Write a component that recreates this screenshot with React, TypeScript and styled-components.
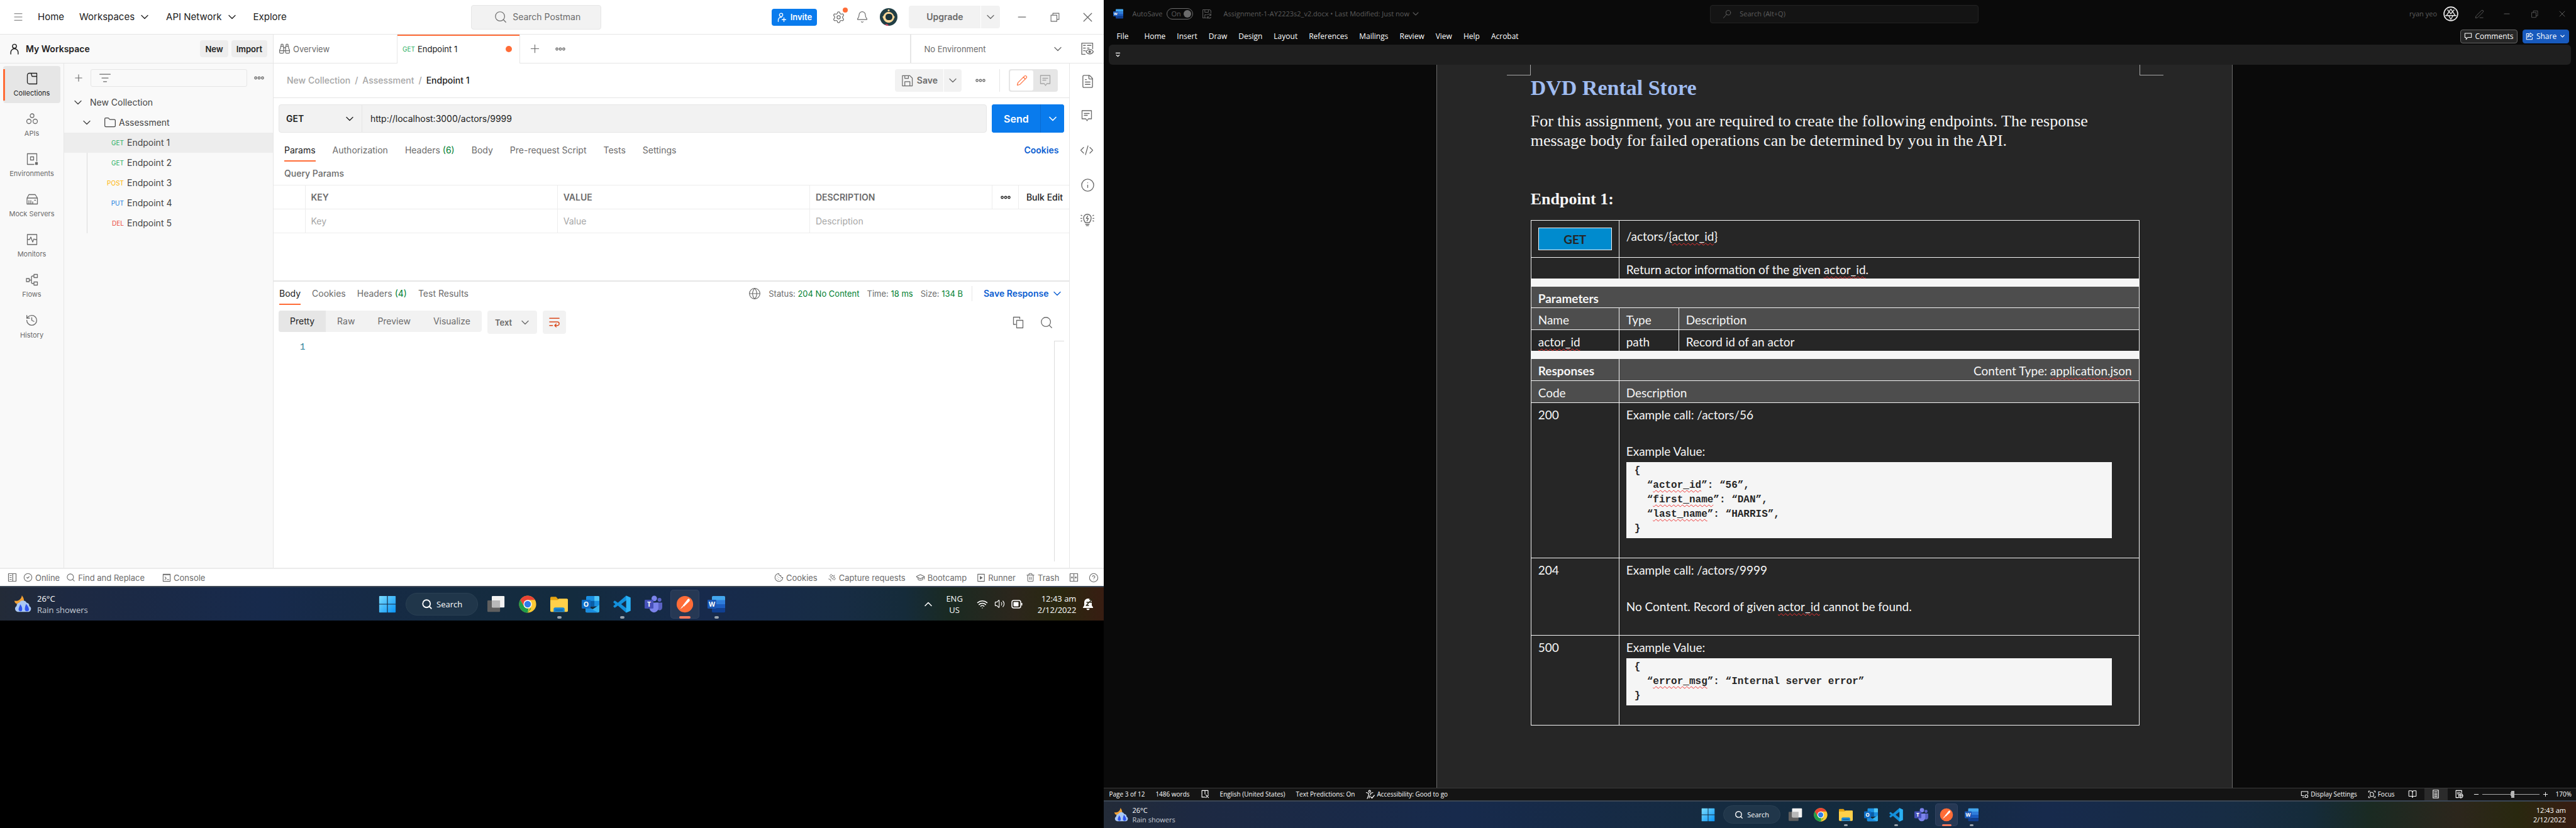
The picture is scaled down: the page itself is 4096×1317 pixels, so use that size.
import React from "react";
import styled, { createGlobalStyle, css } from "styled-components";
import { Menu, ChevronDown, ChevronUp, Search, Bell, X, Minus, Plus, ListFilter, History, Binoculars, Settings, Globe, FileText, Info, Pencil, Cookie, Trash2, CircleHelp, CircleCheck, Folder, Satellite, GraduationCap, Wifi, Volume2, BookOpen, PenLine } from "lucide-react";

const ui = `Inter, "Liberation Sans", sans-serif`;
const segoe = `"Open Sans", "Noto Sans", sans-serif`;
const line = "#e6e6e6";

const Global = createGlobalStyle`
  * { box-sizing: border-box; }
  body { margin: 0; background: #000; }
  button, input, select { font: inherit; color: inherit; margin: 0; padding: 0; border: 0; background: none; border-radius: 0; min-width: 0; white-space: nowrap; }
  input:focus, select:focus { outline: none; }
  a { color: inherit; text-decoration: none; }
  h1, h2, p { margin: 0; }
  svg { display: block; flex: none; }
`;

/* ---------- shared ---------- */
const Desktop = styled.div`
  display: flex;
  align-items: flex-start;
  min-height: 100vh;
`;
const Display = styled.div<{ $share: number }>`
  flex: ${(p) => p.$share} 1 0;
  min-width: 0;
  aspect-ratio: 16 / 9;
  display: flex;
  flex-direction: column;
  overflow: hidden;
`;
const Spring = styled.div`
  flex: 1;
`;

type IcoProps = { s?: number; w?: number; children?: React.ReactNode };
const Ico = ({ s = 20, w = 1.3, children }: IcoProps) => (
  <svg width={s} height={s} viewBox="0 0 20 20" fill="none" stroke="currentColor" strokeWidth={w} strokeLinecap="round" strokeLinejoin="round" aria-hidden="true">
    {children}
  </svg>
);
const Dots = ({ s = 18 }: { s?: number }) => (
  <Ico s={s} w={1.5}><circle cx="4" cy="10" r="1.9" /><circle cx="10" cy="10" r="1.9" /><circle cx="16" cy="10" r="1.9" /></Ico>
);
const NoteIcon = ({ s = 20 }: { s?: number }) => (
  <Ico s={s}><path d="M2.500 2h15v13h-5L10.500 18 8.500 15h-6zM6 6.500h8M6 9.500h5" /></Ico>
);
const Chev = ({ s = 20, w = 1.6 }: { s?: number; w?: number }) => <ChevronDown size={s} strokeWidth={w} />;

/* ---------- taskbar ---------- */
type Size = { $big: boolean };
const Bar = styled.footer<Size>`
  flex: none;
  height: ${(p) => (p.$big ? 55 : 44)}px;
  display: grid;
  grid-template-columns: 1fr auto 1fr;
  align-items: center;
  border-top: 2px solid #3b4654;
  color: #fff;
  font: 400 ${(p) => (p.$big ? 13 : 11)}px/${(p) => (p.$big ? 18 : 15)}px ${segoe};
  background: linear-gradient(90deg, #232b38 0%, #1d2942 6%, #172a4c 24%, #152b40 42%, #132b3e 52%, #172a4c 64%, #172c44 76%, #152b3a 82%, #1a2a22 86%, #2c261c 92%, #29280f 96%, #381d12 100%);
`;
const Weather = styled.div<Size>`
  display: flex;
  align-items: center;
  gap: ${(p) => (p.$big ? 9 : 6)}px;
  padding-left: ${(p) => (p.$big ? 23 : 17)}px;
  span { color: #c5cbd4; }
`;
const Apps = styled.div`
  display: flex;
  align-items: center;
  height: 100%;
`;
const AppButton = styled.button<Size & { $active?: boolean }>`
  width: ${(p) => (p.$big ? 46 : 36)}px;
  height: ${(p) => (p.$big ? 46 : 36)}px;
  margin: 0 2px;
  display: grid;
  place-items: center;
  border-radius: 5px;
  ${(p) => p.$active && css`background: #263854; box-shadow: inset 0 0 0 1px #314360;`}
  > * { grid-area: 1 / 1; }
`;
const Running = styled.i<Size & { $active?: boolean }>`
  align-self: end;
  width: ${(p) => (p.$active ? (p.$big ? 18 : 15) : p.$big ? 7 : 6)}px;
  height: ${(p) => (p.$big ? 4 : 3)}px;
  border-radius: 2px;
  background: ${(p) => (p.$active ? "#f5785c" : "#9aa3ad")};
`;
const Pill = styled.button<Size>`
  display: flex;
  align-items: center;
  justify-content: center;
  gap: 6px;
  width: ${(p) => (p.$big ? 115 : 91)}px;
  height: ${(p) => (p.$big ? 36 : 29)}px;
  margin: 0 4px;
  border-radius: 18px;
  background: #20364a;
  border: 1px solid #2a4053;
`;
const Tray = styled.div`
  display: flex;
  justify-content: flex-end;
  align-items: center;
  gap: 10px;
  padding-right: 16px;
`;
const Lang = styled.span`
  text-align: center;
  margin: 0 12px 0 8px;
`;
const Clock = styled.time`
  text-align: right;
  margin-left: 14px;
`;

const LetterTile = ({ d, t, tile }: { d: React.ReactNode; t: string; tile: string }) => (
  <>
    {d}
    <rect x="0" y="8" width="16" height="16" rx="1.500" fill={tile} />
    <text x="8" y="20.500" textAnchor="middle" fontFamily="Open Sans" fontWeight="700" fontSize="12" fill="#fff">{t}</text>
  </>
);
const icons: Record<string, React.ReactNode> = {
  win: (<><defs><linearGradient id="wg" x1="0" y1="0" x2="1" y2="1"><stop offset="0" stopColor="#7adcff" /><stop offset="1" stopColor="#0a94f5" /></linearGradient></defs><path fill="url(#wg)" d="M1 2a1 1 0 0 1 1-1h13.300v14.300H1zM16.700 1H30a1 1 0 0 1 1 1v13.300H16.700zM1 16.700h14.300V31H2a1 1 0 0 1-1-1zM16.700 16.700H31V30a1 1 0 0 1-1 1H16.700z" /></>),
  task: (<><rect x="0" y="9" width="23" height="21" rx="1.500" fill="#5f5f5f" /><rect x="8" y="1" width="23" height="21" rx="1.500" fill="#f2f2f2" /><path d="M8 9h15v13H9.500A1.500 1.500 0 0 1 8 20.500z" fill="#b9b9b9" /></>),
  chrome: (<><circle cx="16" cy="16" r="15.500" fill="#fcc934" /><path d="M2.600 8.200A15.500 15.500 0 0 1 29.400 8.200H16L9.300 19.900z" fill="#ea4335" /><path d="M2.600 8.200 9.300 19.900A7.700 7.700 0 0 0 16 23.700h6.700L16 31.500A15.500 15.500 0 0 1 2.600 8.200z" fill="#1e9e49" /><path d="M22.700 19.900 16 31.500 17.500 23.600z" fill="#fcc934" /><circle cx="16" cy="16" r="7.600" fill="#fff" /><circle cx="16" cy="16" r="6" fill="#2f7de9" /></>),
  files: (<><path d="M0 4.500A2 2 0 0 1 2 2.500h8.500l3.500 4h16a2 2 0 0 1 2 2V12H0z" fill="#e5a412" /><path d="M0 8.500h13l2.500-2.500h14.500a2 2 0 0 1 2 2v20a2 2 0 0 1-2 2H2a2 2 0 0 1-2-2z" fill="#ffd04a" /><path d="M6 30v-5a3 3 0 0 1 3-3h14a3 3 0 0 1 3 3v5z" fill="#1b87d4" /><path d="M9 26h14v1.500H9z" fill="#0b5a9c" /></>),
  outlook: (<LetterTile t="O" tile="#0f6cc4" d={<><path d="M8 3a2 2 0 0 1 2-2h20a2 2 0 0 1 2 2v17H8z" fill="#1a8fe0" /><path d="M23 1h7a2 2 0 0 1 2 2v7h-9z" fill="#4fc5f7" /><path d="M8 10h15v10H8z" fill="#0a5ea8" /><path d="M7 20l13 5 12-8v12a2 2 0 0 1-2 2H9a2 2 0 0 1-2-2z" fill="#35b4f0" /><path d="M7 20l23 11H9a2 2 0 0 1-2-2z" fill="#1b8de0" /></>} />),
  code: (<><path d="M23.500.5 31.500 4v24l-8 3.500-15-13L3 22.500.500 20.500V19L4 16 .5 13v-1.500L3 9.500l5.500 4z" fill="#1390dc" /><path d="M23.500.5 31.500 4v24l-8 3.500z" fill="#2ab1f4" /><path d="M23.500 9v14L14.500 16z" fill="#162b46" /></>),
  teams: (<LetterTile t="T" tile="#4650b8" d={<><circle cx="27" cy="8" r="3.500" fill="#5a62c4" /><circle cx="17.500" cy="5.500" r="5" fill="#7b83eb" /><path d="M20 13h12v9a5 5 0 0 1-8 4z" fill="#5a62c4" /><path d="M9 13h16v10a8 8 0 0 1-16 0z" fill="#7b83eb" /></>} />),
  postman: (<><circle cx="16" cy="16" r="15" fill="#ff6c37" /><path d="M23.800 6.300c1.500 1.200 1.500 3.300.2 4.600L14 20.500l-2-2 8.500-10.900c.9-1.100 2.200-1.900 3.300-1.300zM11.500 19l1.700 1.700-5.700 4.300z" fill="#fff" /></>),
  word: (<LetterTile t="W" tile="#1a57b5" d={<><path d="M8 3a2 2 0 0 1 2-2h20a2 2 0 0 1 2 2v6H8z" fill="#43a6ee" /><path d="M8 8.500h24V16H8z" fill="#2f7ddb" /><path d="M8 16h24v7.500H8z" fill="#1c5dc0" /><path d="M8 23.500h24V29a2 2 0 0 1-2 2H10a2 2 0 0 1-2-2z" fill="#103f91" /></>} />),
};
const Glyph = ({ name, s }: { name: string; s: number }) => (
  <svg width={s} height={s} viewBox="0 0 32 32" aria-hidden="true">{icons[name]}</svg>
);
const WeatherIcon = ({ s }: { s: number }) => (
  <svg width={s} height={s} viewBox="0 0 32 32" aria-hidden="true">
    <path d="M14 0c4 5 5 10 3 15L4 16C2 15 0 13 0 10c6 2 13-2 14-10z" fill="#f2a134" />
    <path d="M6 31a6 6 0 0 1-2-11 6 6 0 0 1 5-6 8 8 0 0 1 14 0 6 6 0 0 1 5 6 6 6 0 0 1-1 11z" fill="#a9c8f5" />
    <path d="M11 17c4 5 4 9 3 12a4 4 0 0 1-6-1c-1-3 1-6 3-11zM22 16c4 5 6 9 5 12a4 4 0 0 1-7 0c-1-3 0-7 2-12z" fill="#2f55ee" />
  </svg>
);
const pinned = [
  ["task", "Task view", 0], ["chrome", "Google Chrome", 0], ["files", "File Explorer", 1], ["outlook", "Outlook", 0],
  ["code", "Visual Studio Code", 1], ["teams", "Teams", 0], ["postman", "Postman", 2], ["word", "Word", 1],
] as const;
const Taskbar = ({ big, tray }: { big: boolean; tray?: React.ReactNode }) => {
  const s = big ? 28 : 22;
  return (
    <Bar $big={big}>
      <Weather $big={big}><WeatherIcon s={big ? 27 : 22} /><div>26°C<br /><span>Rain showers</span></div></Weather>
      <Apps>
        <AppButton $big={big} aria-label="Start"><Glyph name="win" s={s} /></AppButton>
        <Pill $big={big}><Search size={big ? 18 : 14} strokeWidth={2.4} />Search</Pill>
        {pinned.map(([n, label, state]) => (
          <AppButton key={n} $big={big} $active={state === 2} aria-label={label}>
            <Glyph name={n} s={s} />
            {state > 0 && <Running $big={big} $active={state === 2} />}
          </AppButton>
        ))}
      </Apps>
      <Tray>{tray}<Clock>12:43 am<br />2/12/2022</Clock>{big && (
        <svg width="18" height="20" viewBox="0 0 18 20" aria-hidden="true"><path d="M9 1a6 6 0 0 0-6 6v5l-2 3v1h16v-1l-2-3V7a6 6 0 0 0-6-6zM6.500 17a2.500 2.500 0 0 0 5 0z" fill="#fff" /><path d="M6.500 7h4L6.500 12h4M11 2.500h4L11 7h4" fill="none" stroke="#2a2413" strokeWidth="1.500" /></svg>
      )}</Tray>
    </Bar>
  );
};

/* ---------- API client window ---------- */
const ApiWindow = styled.main`
  flex: 1;
  min-height: 0;
  display: flex;
  flex-direction: column;
  background: #fff;
  color: #212121;
  font: 400 14px/20px ${ui};
`;
const TopBar = styled.header`
  flex: none;
  height: 55px;
  display: grid;
  grid-template-columns: minmax(0, 749fr) minmax(0, 207fr) minmax(0, 799fr);
  align-items: center;
  border-bottom: 1px solid ${line};
`;
const Nav = styled.nav`
  display: flex;
  align-items: center;
  gap: 24px;
  padding-left: 20px;
  font-size: 15px;
`;
const NavButton = styled.button`
  display: flex;
  align-items: center;
  gap: 6px;
`;
const Finder = styled.label`
  display: flex;
  align-items: center;
  gap: 8px;
  height: 39px;
  padding-left: 35px;
  border: 1px solid ${line};
  border-radius: 4px;
  background: #f2f2f2;
  color: #6b6b6b;
  input { flex: 1; width: 0; }
  input::placeholder { color: #6b6b6b; opacity: 1; }
`;
const Actions = styled.div`
  display: flex;
  align-items: center;
  justify-content: flex-end;
  gap: 18px;
  color: #6b6b6b;
`;
const Invite = styled.button`
  display: flex;
  align-items: center;
  justify-content: center;
  gap: 6px;
  width: 72px;
  height: 27px;
  margin-right: 6px;
  border-radius: 4px;
  background: #097bed;
  color: #fff;
  font-weight: 600;
  font-size: 13px;
`;
const IconButton = styled.button<{ $w?: number }>`
  display: grid;
  place-items: center;
  width: ${(p) => p.$w || 20}px;
  height: 28px;
  color: #6b6b6b;
`;
const GearBadge = styled.span`
  position: relative;
  &::after {
    content: "";
    position: absolute;
    top: -5px;
    right: -4px;
    width: 8px;
    height: 8px;
    border-radius: 50%;
    background: #ff6c37;
  }
`;
const Split = styled.div<{ $blue?: boolean; $h: number }>`
  display: flex;
  gap: 1px;
  height: ${(p) => p.$h}px;
  border-radius: 4px;
  overflow: hidden;
  font-weight: 600;
  background: ${(p) => (p.$blue ? "#0a6bd0" : "#fff")};
  color: ${(p) => (p.$blue ? "#fff" : "#6b6b6b")};
  button { display: flex; align-items: center; justify-content: center; gap: 6px; background: ${(p) => (p.$blue ? "#097bed" : "#f2f2f2")}; }
`;
const SplitPart = styled.button<{ $w: number; $large?: boolean }>`
  width: ${(p) => p.$w}px;
  font-size: ${(p) => (p.$large ? 16 : 14)}px;
`;
const WindowButtons = styled.div`
  display: flex;
  margin-left: -9px;
  color: #555;
`;
const Columns = styled.div`
  flex: 1;
  min-height: 0;
  display: flex;
`;
const Sidebar = styled.aside`
  flex: none;
  width: 435px;
  display: flex;
  flex-direction: column;
  background: #f9f9f9;
  border-right: 1px solid ${line};
`;
const SideHead = styled.div`
  flex: none;
  display: flex;
  align-items: center;
  gap: 5px;
  height: 46px;
  padding: 0 9px 0 14px;
  border-bottom: 1px solid ${line};
`;
const SideTitle = styled.h2`
  flex: 1;
  margin-left: 4px;
  font-size: 14px;
  font-weight: 600;
`;
const SmallButton = styled.button`
  height: 27px;
  padding: 0 8px;
  border-radius: 4px;
  background: #ededed;
  font-size: 13px;
  font-weight: 600;
`;
const Rail = styled.nav`
  flex: none;
  width: 102px;
  padding: 4px 5px;
  display: flex;
  flex-direction: column;
  gap: 5px;
  border-right: 1px solid ${line};
`;
const RailItem = styled.button<{ $on?: boolean }>`
  height: 59px;
  display: flex;
  flex-direction: column;
  align-items: center;
  justify-content: center;
  gap: 6px;
  padding-top: 1px;
  border-radius: 4px;
  font-size: 11px;
  line-height: 14px;
  color: ${(p) => (p.$on ? "#212121" : "#6b6b6b")};
  background: ${(p) => (p.$on ? "linear-gradient(#ff6c37, #ff6c37) 0 50% / 3px 50px no-repeat #e6e6e6" : "none")};
`;
const Tree = styled.div`
  flex: 1;
  min-width: 0;
  color: #454545;
`;
const TreeTools = styled.div`
  display: flex;
  align-items: center;
  gap: 10px;
  padding: 9px 13px 9px 14px;
  color: #6b6b6b;
`;
const FilterBox = styled.label`
  flex: 1;
  display: flex;
  align-items: center;
  height: 28px;
  padding-left: 12px;
  border: 1px solid ${line};
  border-radius: 3px;
  input { flex: 1; width: 0; }
`;
const TreeRow = styled.div<{ $pad: number; $on?: boolean }>`
  height: 32px;
  display: flex;
  align-items: center;
  padding-left: ${(p) => p.$pad}px;
  background: ${(p) => (p.$on ? "#ededed" : "none")};
`;
const Branch = styled.div`
  background: linear-gradient(#dcdcdc, #dcdcdc) 36px 0 / 1px 100% no-repeat;
`;
const verbColor: Record<string, string> = { GET: "#27ae60", POST: "#ffb400", PUT: "#1a7fe0", DEL: "#eb4a40" };
const Verb = styled.span<{ $m: string }>`
  color: ${(p) => verbColor[p.$m]};
  font-size: 10px;
`;
const TreeVerb = styled(Verb)`
  width: 60px;
  margin-right: 5px;
  text-align: right;
`;
const Gap = styled.span<{ $w: number }>`
  width: ${(p) => p.$w}px;
`;
const Workbench = styled.section`
  flex: 1;
  min-width: 0;
  display: flex;
  flex-direction: column;
`;
const TabStrip = styled.div`
  flex: none;
  display: flex;
  align-items: center;
  height: 46px;
  border-bottom: 1px solid ${line};
  color: #6b6b6b;
  font-size: 13px;
`;
const Tab = styled.button<{ $on?: boolean }>`
  display: flex;
  align-items: center;
  gap: 4px;
  width: 196px;
  height: 46px;
  padding: 0 12px 0 8px;
  ${(p) => p.$on && css`
    margin-bottom: -1px;
    background: #fff;
    color: #212121;
    border: 1px solid ${line};
    border-width: 0 1px;
    box-shadow: inset 0 2px #ff6c37;
  `}
`;
const Unsaved = styled.i`
  width: 10px;
  height: 10px;
  margin-left: auto;
  border-radius: 50%;
  background: #ff6c37;
`;
const Picker = styled.label<{ $w: number; $pad: number; $h: number }>`
  display: grid;
  align-items: center;
  width: ${(p) => p.$w}px;
  height: ${(p) => p.$h}px;
  > * { grid-area: 1 / 1; }
  select { appearance: none; width: 100%; height: 100%; padding-left: ${(p) => p.$pad}px; }
  svg { justify-self: end; margin-right: 9px; pointer-events: none; }
`;
const EnvPicker = styled(Picker)`
  border-left: 2px solid ${line};
`;
const Pane = styled.div`
  flex: 1;
  min-width: 0;
  display: flex;
  flex-direction: column;
`;
const ContextRail = styled.aside`
  flex: none;
  width: 55px;
  display: flex;
  flex-direction: column;
  align-items: center;
  gap: 27px;
  padding-top: 14px;
  border-left: 1px solid ${line};
`;
const CrumbRow = styled.div`
  flex: none;
  display: flex;
  align-items: center;
  height: 55px;
  padding: 0 18px 0 21px;
  border-bottom: 1px solid ${line};
`;
const Crumbs = styled.nav`
  flex: 1;
  display: flex;
  gap: 7px;
  font-weight: 500;
  color: #a6a6a6;
  b { font-weight: 500; color: #212121; }
`;
const Divider = styled.i<{ $h: number }>`
  width: 1px;
  height: ${(p) => p.$h}px;
  margin-right: 14px;
  background: ${line};
`;
const Modes = styled.div`
  display: flex;
  padding: 2px;
  border-radius: 4px;
  background: #e6e6e6;
`;
const Mode = styled.button<{ $on?: boolean }>`
  display: grid;
  place-items: center;
  width: 37px;
  height: 32px;
  border-radius: 3px;
  background: ${(p) => (p.$on ? "#fff" : "none")};
  color: ${(p) => (p.$on ? "#ff6c37" : "#a6a6a6")};
`;
const RequestPane = styled.div`
  flex: none;
  height: 292px;
  border-bottom: 2px solid ${line};
`;
const UrlRow = styled.form`
  display: flex;
  gap: 8px;
  padding: 10px 8px 0;
`;
const UrlBox = styled.div`
  flex: 1;
  display: flex;
  height: 45px;
  border: 1px solid ${line};
  border-radius: 4px;
  background: #f2f2f2;
  > input { flex: 1; padding-left: 13px; border-left: 1px solid ${line}; }
  select { font-weight: 600; }
`;
const Tabs = styled.div<{ $gap: number; $pad: number; $h: number }>`
  flex: none;
  display: flex;
  align-items: flex-end;
  gap: ${(p) => p.$gap}px;
  height: ${(p) => p.$h}px;
  padding: 0 ${(p) => p.$pad}px;
  color: #6b6b6b;
  em { font-style: normal; color: #007f31; }
`;
const TabButton = styled.button<{ $on?: boolean }>`
  height: 35px;
  border-bottom: 2px solid ${(p) => (p.$on ? "#ff6c37" : "transparent")};
  color: ${(p) => (p.$on ? "#212121" : "inherit")};
`;
const BlueLink = styled.a`
  display: flex;
  align-items: center;
  gap: 4px;
  height: 35px;
  padding-bottom: 2px;
  font-weight: 600;
  color: #0a5dd1;
`;
const PaneTitle = styled.h2`
  padding: 0 17px;
  font-size: 14px;
  font-weight: 500;
  line-height: 37px;
  color: #6b6b6b;
`;
const ParamTable = styled.table`
  width: 100%;
  table-layout: fixed;
  border-collapse: collapse;
  th, td { height: 38px; padding: 0 9px; border: 1px solid #ededed; text-align: left; color: #6b6b6b; }
  th { font-weight: 600; }
  th:first-child, td:first-child { border-left: 0; }
  th:last-child, td:last-child { border-right: 0; }
  th:nth-last-child(2) { color: #212121; padding-left: 12px; }
  input { width: 100%; }
  input::placeholder { color: #a6a6a6; opacity: 1; }
`;
const Bulk = styled.button`
  padding-left: 3px;
  font-weight: 500;
  color: #212121;
`;
const Stats = styled.div`
  display: flex;
  align-items: center;
  gap: 12px;
  height: 35px;
  padding-bottom: 2px;
  margin-left: auto;
  margin-right: -4px;
  font-size: 13px;
`;
const ToolRow = styled.div`
  flex: none;
  display: flex;
  align-items: flex-start;
  gap: 9px;
  padding: 9px 19px 11px 8px;
  color: #6b6b6b;
`;
const Segments = styled.div`
  display: flex;
  border-radius: 4px;
  overflow: hidden;
  background: #f2f2f2;
`;
const Segment = styled.button<{ $on?: boolean }>`
  height: 34px;
  padding: 0 18px;
  background: ${(p) => (p.$on ? "#e6e6e6" : "none")};
  color: ${(p) => (p.$on ? "#212121" : "inherit")};
`;
const GreyPicker = styled(Picker)`
  border-radius: 4px;
  background: #f2f2f2;
  font-size: 13px;
  font-weight: 600;
`;
const ToolButton = styled(IconButton)`
  height: 37px;
`;
const WrapButton = styled(ToolButton)`
  border-radius: 4px;
  background: #f2f2f2;
  color: #d9481c;
`;
const Editor = styled.div`
  flex: 1;
  display: flex;
  justify-content: space-between;
  padding: 0 8px 10px 42px;
  font-family: "Liberation Mono", monospace;
  color: #237893;
`;
const Ruler = styled.div`
  width: 16px;
  border: 1px solid #dcdcdc;
  border-width: 1px 0 0 1px;
`;
const StatusBar = styled.footer`
  flex: none;
  display: flex;
  align-items: center;
  gap: 16px;
  height: 29px;
  padding: 0 8px 0 12px;
  border-top: 2px solid #ebebeb;
  font-size: 13px;
  color: #6b6b6b;
  button { display: flex; align-items: center; gap: 4px; }
`;
const Near = styled.div`
  display: flex;
  gap: 10px;
  margin-right: 12px;
`;

const railItems: [string, React.ReactNode][] = [
  ["Collections", <Ico><path d="M2.500 4.500a3 3 0 0 1 3-3h12v17h-12a3 3 0 0 1-3-3zM8.500 1.500l1.500 5h7.500" /></Ico>],
  ["APIs", <Ico><circle cx="10" cy="5" r="3" /><circle cx="5" cy="14" r="3.500" /><circle cx="15" cy="14" r="3.500" /></Ico>],
  ["Environments", <Ico><path d="M17.500 13V1.500h-15v17H13M7.500 6.500h5v5h-5z" /><path d="M15.500 15.500h3v3h-3z" fill="currentColor" /></Ico>],
  ["Mock Servers", <Ico><path d="M2 8l3-5.500h10L18.500 8v9.500H2zM2 8h16.500M5 12v5M8 12v5M11 14v3M14 11.500h1.500" /></Ico>],
  ["Monitors", <Ico><path d="M2.500 2h15v16h-15zM2.500 10H6l2-4 3 8 2-5 1.500 1h3" /></Ico>],
  ["Flows", <Ico><path d="M1 8h4.500v5H1zM13 1.500h5.500v5H13zM13 13.500h5.500v5H13zM5.500 10.500H9M13 4h-2a2 2 0 0 0-2 2v8a2 2 0 0 0 2 2h2" /></Ico>],
  ["History", <History size={21} strokeWidth={1.5} />],
];
const endpoints: [string, string][] = [["GET", "Endpoint 1"], ["GET", "Endpoint 2"], ["POST", "Endpoint 3"], ["PUT", "Endpoint 4"], ["DEL", "Endpoint 5"]];

const RestoreIcon = () => <Ico s={17}><path d="M2.500 6h11v11.500h-11zM6 6V2.500h11.500V14h-4" /></Ico>;

const ApiClient = () => (
  <ApiWindow>
    <TopBar>
      <Nav>
        <IconButton $w={16} aria-label="Menu"><Menu size={18} strokeWidth={1.300} /></IconButton>
        <NavButton>Home</NavButton>
        <NavButton>Workspaces <Chev /></NavButton>
        <NavButton>API Network <Chev /></NavButton>
        <NavButton>Explore</NavButton>
      </Nav>
      <Finder><Search size={22} strokeWidth={1.300} /><input aria-label="Search Postman" placeholder="Search Postman" /></Finder>
      <Actions>
        <Invite><Ico s={15} w={1.800}><circle cx="8" cy="5" r="3.500" /><path d="M2 19v-4a6 6 0 0 1 7-5M14 11v8M10 15h8" /></Ico>Invite</Invite>
        <IconButton aria-label="Settings"><GearBadge><Settings size={21} strokeWidth={1.400} /></GearBadge></IconButton>
        <IconButton aria-label="Notifications"><Bell size={20} strokeWidth={1.400} /></IconButton>
        <svg width="28" height="28" viewBox="0 0 28 28" role="img" aria-label="Account"><circle cx="14" cy="14" r="14" fill="#223f45" /><path d="M4 13.500c1 0 1.500-.5 2-2C7.500 8 10.500 6 14 6s6.500 2 8 5.500c.5 1.500 1 2 2 2-.5 1-1 1.500-1.500 3C21 20.500 18 23 14 23s-7-2.500-8.500-6.500c-.5-1.500-1-2-1.500-3z" fill="#ffd99a" /><rect x="9" y="9" width="11" height="10" rx="4.500" fill="#1c343a" /><circle cx="14" cy="3.500" r="1.500" fill="#ffd99a" /><path d="M8 26.600a3.500 3.500 0 0 1 6 1.400 14 14 0 0 1-6-1.400z" fill="#e8476a" /></svg>
        <Split $h={36}><SplitPart $w={114}>Upgrade</SplitPart><SplitPart $w={30} aria-label="Upgrade options"><Chev /></SplitPart></Split>
        <WindowButtons>
          <IconButton $w={52} aria-label="Minimize"><Minus size={20} strokeWidth={1.500} /></IconButton>
          <IconButton $w={52} aria-label="Restore"><RestoreIcon /></IconButton>
          <IconButton $w={52} aria-label="Close"><X size={25} strokeWidth={1.300} /></IconButton>
        </WindowButtons>
      </Actions>
    </TopBar>
    <Columns>
      <Sidebar>
        <SideHead>
          <Ico s={18} w={1.600}><circle cx="10" cy="5" r="3.500" /><path d="M3.500 19v-3a6.500 6.500 0 0 1 13 0v3" /></Ico>
          <SideTitle>My Workspace</SideTitle>
          <SmallButton>New</SmallButton>
          <SmallButton>Import</SmallButton>
        </SideHead>
        <Columns>
          <Rail>
            {railItems.map(([label, icon], i) => <RailItem key={label} $on={i === 0}>{icon}{label}</RailItem>)}
          </Rail>
          <Tree>
            <TreeTools>
              <Plus size={18} strokeWidth={1.500} />
              <FilterBox><ListFilter size={20} strokeWidth={1.500} /><input aria-label="Filter collections" /></FilterBox>
              <Dots />
            </TreeTools>
            <TreeRow $pad={12}><Chev /><Gap $w={9} />New Collection</TreeRow>
            <TreeRow $pad={26}><Chev /><Gap $w={17} /><Folder size={20} strokeWidth={1.500} /><Gap $w={4} />Assessment</TreeRow>
            <Branch>
              {endpoints.map(([verb, name], i) => (
                <TreeRow key={name} $pad={35} $on={i === 0}><TreeVerb $m={verb}>{verb}</TreeVerb>{name}</TreeRow>
              ))}
            </Branch>
          </Tree>
        </Columns>
      </Sidebar>
      <Workbench>
        <TabStrip>
          <Tab><Binoculars size={19} strokeWidth={1.500} />Overview</Tab>
          <Tab $on><Verb $m="GET">GET</Verb>Endpoint 1<Unsaved /></Tab>
          <IconButton $w={46} aria-label="New tab"><Plus size={21} strokeWidth={1.300} /></IconButton>
          <IconButton $w={36} aria-label="Tab options"><Dots /></IconButton>
          <Spring />
          <EnvPicker $w={254} $pad={20} $h={45}>
            <select aria-label="Environment"><option>No Environment</option></select><Chev />
          </EnvPicker>
          <IconButton $w={54} aria-label="Environment quick look"><Ico s={21}><path d="M7 18.500H2V1.500h16.500V10M4.500 5h3M4.500 9h3M4.500 13h3M10.500 5H16M10.500 9H13" /><path d="M8.500 14.500c2.800-4.500 8.200-4.500 11 0-2.800 4.500-8.200 4.500-11 0z" /><circle cx="14" cy="14.500" r="1.300" fill="currentColor" /></Ico></IconButton>
        </TabStrip>
        <Columns>
          <Pane>
            <CrumbRow>
              <Crumbs><a href="#collection">New Collection</a><span>/</span><a href="#assessment">Assessment</a><span>/</span><b>Endpoint 1</b></Crumbs>
              <Split $h={36}><SplitPart $w={77}><Ico s={19}><path d="M2 1.500h12.500l4 4v13H2zM6 1.500v4.500h6V1.500M6 18.500v-7h8.500v7" /></Ico>Save</SplitPart><SplitPart $w={28} aria-label="Save options"><Chev /></SplitPart></Split>
              <IconButton $w={60} aria-label="More actions"><Dots /></IconButton>
              <Divider $h={36} />
              <Modes>
                <Mode $on aria-label="Edit"><Pencil size={18} strokeWidth={1.500} /></Mode>
                <Mode aria-label="Comments"><NoteIcon s={20} /></Mode>
              </Modes>
            </CrumbRow>
            <RequestPane>
              <UrlRow onSubmit={(e) => e.preventDefault()}>
                <UrlBox>
                  <Picker $w={131} $pad={11} $h={43}><select aria-label="Method"><option>GET</option></select><Chev /></Picker>
                  <input aria-label="Request URL" defaultValue="http://localhost:3000/actors/9999" />
                </UrlBox>
                <Split $blue $h={45}><SplitPart $w={77} $large>Send</SplitPart><SplitPart $w={37} type="button" aria-label="Send options"><Chev w={2} /></SplitPart></Split>
              </UrlRow>
              <Tabs $gap={27} $pad={17} $h={46}>
                <TabButton $on>Params</TabButton><TabButton>Authorization</TabButton><TabButton>Headers <em>(6)</em></TabButton><TabButton>Body</TabButton>
                <TabButton>Pre-request Script</TabButton><TabButton>Tests</TabButton><TabButton>Settings</TabButton>
                <Spring /><BlueLink href="#cookies">Cookies</BlueLink>
              </Tabs>
              <PaneTitle>Query Params</PaneTitle>
              <ParamTable>
                <colgroup><col width="50" /><col /><col /><col width="290" /><col width="42" /><col width="81" /></colgroup>
                <thead><tr><th /><th>KEY</th><th>VALUE</th><th>DESCRIPTION</th><th><Dots /></th><th><Bulk>Bulk Edit</Bulk></th></tr></thead>
                <tbody><tr><td /><td><input aria-label="Key" placeholder="Key" /></td><td><input aria-label="Value" placeholder="Value" /></td><td colSpan={3}><input aria-label="Description" placeholder="Description" /></td></tr></tbody>
              </ParamTable>
            </RequestPane>
            <Tabs $gap={18} $pad={9} $h={37}>
              <TabButton $on>Body</TabButton><TabButton>Cookies</TabButton><TabButton>Headers <em>(4)</em></TabButton><TabButton>Test Results</TabButton>
              <Stats>
                <Globe size={20} strokeWidth={1.400} /><span>Status: <em>204 No Content</em></span><span>Time: <em>18 ms</em></span><span>Size: <em>134 B</em></span>
              </Stats>
              <BlueLink href="#save"><Divider $h={24} />Save Response <Chev /></BlueLink>
            </Tabs>
            <ToolRow>
              <Segments><Segment $on>Pretty</Segment><Segment>Raw</Segment><Segment>Preview</Segment><Segment>Visualize</Segment></Segments>
              <GreyPicker $w={79} $pad={12} $h={37}><select aria-label="Format"><option>Text</option></select><Chev /></GreyPicker>
              <WrapButton $w={37} aria-label="Wrap lines"><Ico s={19} w={1.500}><path d="M2 3.500h16M2 9.500h13a3 3 0 0 1 0 6h-4M2 15.500h5M13 13l-2.500 2.500L13 18" /></Ico></WrapButton>
              <Spring />
              <ToolButton $w={38} aria-label="Copy"><Ico><path d="M6 13H2.500V1.500h10V4M7.500 6.500h10v12h-10z" /></Ico></ToolButton>
              <ToolButton $w={34} aria-label="Find in response"><Search size={22} strokeWidth={1.400} /></ToolButton>
            </ToolRow>
            <Editor><span>1</span><Ruler /></Editor>
          </Pane>
          <ContextRail>
            <IconButton aria-label="Documentation"><FileText size={23} strokeWidth={1.400} /></IconButton>
            <IconButton aria-label="Comments"><NoteIcon /></IconButton>
            <IconButton aria-label="Code"><Ico><path d="M5 5.500.5 10 5 14.500M15 5.500l4.500 4.500-4.500 4.500M12 3 8 17" /></Ico></IconButton>
            <IconButton aria-label="Info"><Info size={23} strokeWidth={1.400} /></IconButton>
            <IconButton aria-label="Related requests"><Ico s={22}><path d="M7 14.500C5.500 12.500 4.500 11 4.500 8a5.500 5.500 0 0 1 11 0c0 3-1 4.500-2.500 6.500zM7.500 17h5M8.500 19h3M10.500 5l-2 3.500h3l-2 3.500M1 4l1 .5M.5 8.500H2M1 12.500l1-.5M19 4l-1 .5M19.500 8.500H18M19 12.500l-1-.5" /></Ico></IconButton>
          </ContextRail>
        </Columns>
      </Workbench>
    </Columns>
    <StatusBar>
      <Near>
        <button aria-label="Toggle sidebar"><Ico s={15} w={1.600}><path d="M2 2h16v16H2zM11 2v16M5 6h3M5 10h3M5 14h3" /></Ico></button>
        <button><CircleCheck size={15} strokeWidth={1.700} />Online</button>
        <button><Search size={15} strokeWidth={1.700} />Find and Replace</button>
      </Near>
      <button><Ico s={14} w={1.600}><path d="M2 2h16v16H2zM2 3h16M6 8l3 3-3 3M11 14h4" /></Ico>Console</button>
      <Spring />
      <button><Cookie size={15} strokeWidth={1.700} />Cookies</button>
      <button><Satellite size={14} strokeWidth={1.700} />Capture requests</button>
      <button><GraduationCap size={15} strokeWidth={1.700} />Bootcamp</button>
      <button><Ico s={14} w={1.600}><path d="M2.500 2h15v16h-15z" /><path d="M8 7l4.500 3L8 13z" fill="currentColor" /></Ico>Runner</button>
      <button><Trash2 size={15} strokeWidth={1.700} />Trash</button>
      <button aria-label="Two pane view"><Ico s={15} w={1.600}><path d="M2 2h16v16H2zM10 2v16M5 9h2v2H5zM13 9h2v2h-2z" /></Ico></button>
      <button aria-label="Help"><CircleHelp size={16} strokeWidth={1.600} /></button>
    </StatusBar>
  </ApiWindow>
);

/* ---------- word processor window ---------- */
const WordWindow = styled.main`
  flex: 1;
  min-height: 0;
  display: flex;
  flex-direction: column;
  background: #0a0a0a;
  color: #fff;
  font: 400 12px/16px ${segoe};
`;
const TitleBar = styled.header`
  flex: none;
  height: 44px;
  display: grid;
  grid-template-columns: minmax(0, 964fr) minmax(0, 427fr) minmax(0, 950fr);
  align-items: center;
  color: #5c5c5c;
  font-size: 11px;
`;
const TitleGroup = styled.div`
  display: flex;
  align-items: center;
  gap: 14px;
  padding-left: 15px;
`;
const AutoSave = styled.label`
  display: flex;
  align-items: center;
  gap: 7px;
`;
const Toggle = styled.span`
  display: flex;
  align-items: center;
  justify-content: space-between;
  width: 42px;
  height: 18px;
  padding: 0 2px 0 6px;
  border: 1px solid #6b6b6b;
  border-radius: 9px;
  input { appearance: none; width: 12px; height: 12px; border-radius: 50%; background: #6b6b6b; }
`;
const FileName = styled.span`
  display: flex;
  align-items: center;
  gap: 2px;
  margin-left: 4px;
`;
const WordSearch = styled.label`
  display: flex;
  align-items: center;
  gap: 12px;
  height: 29px;
  padding-left: 19px;
  border: 1px solid #232323;
  border-radius: 4px;
  background: #141414;
  input { flex: 1; width: 0; }
  input::placeholder { color: #5c5c5c; opacity: 1; }
`;
const Account = styled.div`
  display: flex;
  align-items: center;
  justify-content: flex-end;
  gap: 22px;
  padding-right: 11px;
`;
const Person = styled.span`
  display: flex;
  align-items: center;
  gap: 10px;
`;
const DarkButton = styled.button`
  display: grid;
  place-items: center;
  width: 22px;
  height: 22px;
`;
const MenuRow = styled.nav`
  flex: none;
  height: 27px;
  display: flex;
  align-items: center;
  gap: 18px;
  padding: 0 11px 0 20px;
`;
const FileMenu = styled.button`
  margin-right: 7px;
`;
const Collab = styled.div`
  display: flex;
  gap: 8px;
  margin-left: auto;
`;
const CommentsButton = styled.button`
  display: flex;
  align-items: center;
  justify-content: center;
  gap: 4px;
  width: 91px;
  height: 22px;
  border: 1px solid #666;
  border-radius: 4px;
  background: #262626;
`;
const ShareButton = styled(CommentsButton)`
  width: 74px;
  border-color: #185abd;
  background: #185abd;
`;
const Ribbon = styled.div`
  flex: none;
  height: 32px;
  margin: 0 8px;
  padding: 0 10px;
  display: flex;
  align-items: center;
  border-radius: 6px;
  background: #1f1f1f;
`;
const Canvas = styled.div`
  flex: 1;
  min-height: 0;
  display: flex;
  justify-content: center;
  padding-right: 18px;
  overflow: hidden;
`;
const Sheet = styled.article`
  width: 1266px;
  border: 1px solid #6b6b6b;
  border-width: 0 1px;
  background: #262626;
  color: #f5f5f5;
  font: 400 26px/31px "Liberation Serif", serif;
`;
const Marks = styled.div`
  display: flex;
  justify-content: space-between;
  padding: 0 109px 0 111px;
  i { width: 38px; height: 17px; border: 1px solid #a6a6a6; border-width: 0 1px 1px 0; }
  i:last-child { border-width: 0 0 1px 1px; }
`;
const Prose = styled.div`
  padding: 0 147px 0 149px;
`;
const Title = styled.h1`
  margin-bottom: 17px;
  font-size: 34px;
  line-height: 40px;
  color: #a0bcf0;
`;
const Section = styled.h2`
  margin: 62px 0 18px;
  font-size: 26px;
  line-height: 31px;
`;
const Spec = styled.table`
  width: 100%;
  table-layout: fixed;
  border-collapse: collapse;
  font: 400 19px/29px Lato, sans-serif;
  th, td { padding: 4px 11px 0; border: 1px solid #f5f5f5; vertical-align: top; text-align: left; font-weight: 400; }
`;
const Row = styled.tr<{ $h: number; $shade?: boolean }>`
  height: ${(p) => p.$h}px;
  background: ${(p) => (p.$shade ? "#4d4d4d" : "none")};
`;
const Band = styled.tr`
  height: 12px;
  background: #f5f5f5;
`;
const Tagged = styled.td<{ $right?: boolean; $drop?: number }>`
  && { text-align: ${(p) => (p.$right ? "right" : "left")}; padding-top: ${(p) => p.$drop || 4}px; }
`;
const MethodTag = styled.div`
  height: 36px;
  border: 1px solid #f5f5f5;
  background: #008bce;
  color: #262626;
  font-weight: 700;
  line-height: 36px;
  text-align: center;
`;
const Typo = styled.span`
  text-decoration: underline wavy #f03030 1px;
  text-decoration-skip-ink: none;
  text-underline-offset: 3px;
`;
const Sample = styled.div`
  margin: 3px 32px 0 0;
  padding: 3px 13px;
  background: #f5f5f5;
  color: #262626;
  font: 700 16px/23px "Liberation Mono", monospace;
`;
const Field = styled.div`
  padding-left: 20px;
`;
const WordStatus = styled.footer`
  flex: none;
  height: 20px;
  display: flex;
  align-items: center;
  gap: 17px;
  padding: 0 7px 0 8px;
  border-top: 1px solid #3a3a3a;
  background: #141414;
  font-size: 10px;
  button { display: flex; align-items: center; gap: 3px; }
`;
const Views = styled.div`
  display: flex;
  margin: 0 -14px 0 -7px;
`;
const ViewButton = styled.button<{ $on?: boolean }>`
  justify-content: center;
  width: 37px;
  height: 19px;
  background: ${(p) => (p.$on ? "#2b2b2b" : "none")};
`;
const Zoom = styled.label`
  display: flex;
  align-items: center;
  gap: 4px;
  margin-right: -6px;
  input { appearance: none; width: 91px; height: 14px; background: linear-gradient(#a6a6a6, #a6a6a6) 50% 50% / 100% 1px no-repeat, linear-gradient(#a6a6a6, #a6a6a6) 50% 50% / 1px 6px no-repeat; }
  input::-webkit-slider-thumb { appearance: none; width: 5px; height: 11px; background: #b5b5b5; }
`;

const menus = ["Home", "Insert", "Draw", "Design", "Layout", "References", "Mailings", "Review", "View", "Help", "Acrobat"];

type FieldLine = [name: string, rest: string];
const JsonSample = ({ fields }: { fields: FieldLine[] }) => (
  <Sample>
    <div>{"{"}</div>
    {fields.map(([name, rest]) => <Field key={name}>“<Typo>{name}</Typo>”: {rest}</Field>)}
    <div>{"}"}</div>
  </Sample>
);

const WordApp = () => (
  <WordWindow>
    <TitleBar>
      <TitleGroup>
        <Glyph name="word" s={16} />
        <AutoSave>AutoSave <Toggle>On<input type="checkbox" defaultChecked /></Toggle></AutoSave>
        <Ico s={16}><path d="M9 18H2V2h14l2 2v4M6 2v5h7V2M6 18v-6h3" /><path d="M18 13a4 4 0 0 0-7-1M11 16a4 4 0 0 0 7 1M18 10v3h-3M11 19v-3h3" /></Ico>
        <FileName>Assignment-1-AY2223s2_v2.docx • Last Modified: Just now <Chev s={16} /></FileName>
      </TitleGroup>
      <WordSearch><Ico s={15}><circle cx="12" cy="7" r="5" /><path d="M8.500 10.500 2 18" /></Ico><input aria-label="Search" placeholder="Search (Alt+Q)" /></WordSearch>
      <Account>
        <Person>
          ryan yeo
          <svg width="24" height="24" viewBox="0 0 22 22" role="img" aria-label="Account"><circle cx="11" cy="11" r="10" fill="#111" stroke="#eee" strokeWidth="1.500" /><path d="M3 13.500h16M11 4 5 13M11 4l6 9M6 5l5 6 5-6M8 14l3 5 3-5" fill="none" stroke="#eee" strokeWidth="1.200" /></svg>
        </Person>
        <DarkButton aria-label="Drawing"><PenLine size={15} strokeWidth={1.500} /></DarkButton>
        <DarkButton aria-label="Minimize"><Minus size={14} strokeWidth={1.800} /></DarkButton>
        <DarkButton aria-label="Restore"><Ico s={13}><path d="M3 6h10v12H3zM6.500 6V2H17v12h-4" /></Ico></DarkButton>
        <DarkButton aria-label="Close"><X size={16} strokeWidth={1.500} /></DarkButton>
      </Account>
    </TitleBar>
    <MenuRow>
      <FileMenu>File</FileMenu>
      {menus.map((m) => <button key={m}>{m}</button>)}
      <Collab>
        <CommentsButton><Ico s={13} w={1.600}><path d="M2 3h16v10H9l-4 5v-5H2z" /></Ico>Comments</CommentsButton>
        <ShareButton><Ico s={13} w={1.600}><path d="M8 4H2v14h14v-5M11 2l7 5-7 5V9c-3 0-5 1-6 4 0-5 2-8 6-8z" /></Ico>Share<Chev s={11} w={3} /></ShareButton>
      </Collab>
    </MenuRow>
    <Ribbon><Ico s={9} w={2.500}><path d="M3 3h14M5 10l5 5 5-5" /></Ico></Ribbon>
    <Canvas>
      <Sheet>
        <Marks><i /><i /></Marks>
        <Prose>
          <Title>DVD Rental Store</Title>
          <p>For this assignment, you are required to create the following endpoints. The response message body for failed operations can be determined by you in the API.</p>
          <Section>Endpoint 1:</Section>
          <Spec>
            <colgroup><col width="140" /><col width="95" /><col /></colgroup>
            <tbody>
              <Row $h={59}><Tagged $drop={11}><MethodTag>GET</MethodTag></Tagged><Tagged colSpan={2} $drop={10}>/actors/{"{"}<Typo>actor_id</Typo>{"}"}</Tagged></Row>
              <Row $h={34}><td /><td colSpan={2}>Return actor information of the given <Typo>actor_id</Typo>.</td></Row>
              <Band><Tagged colSpan={3} /></Band>
              <Row $h={34} $shade><th colSpan={3}><b>Parameters</b></th></Row>
              <Row $h={35} $shade><th>Name</th><th>Type</th><th>Description</th></Row>
              <Row $h={34}><td><Typo>actor_id</Typo></td><td>path</td><td>Record id of an actor</td></Row>
              <Band><Tagged colSpan={3} /></Band>
              <Row $h={35} $shade><th><b>Responses</b></th><Tagged colSpan={2} $right>Content Type: <Typo>application.json</Typo></Tagged></Row>
              <Row $h={35} $shade><th>Code</th><th colSpan={2}>Description</th></Row>
              <Row $h={247}><td>200</td><td colSpan={2}>Example call: /actors/56<br /><br />Example Value:
                <JsonSample fields={[["actor_id", "“56”,"], ["first_name", "“DAN”,"], ["last_name", "“HARRIS”,"]]} /></td></Row>
              <Row $h={123}><td>204</td><td colSpan={2}>Example call: /actors/9999<br /><br />No Content. Record of given <Typo>actor_id</Typo> cannot be found.</td></Row>
              <Row $h={143}><td>500</td><td colSpan={2}>Example Value:
                <JsonSample fields={[["error_msg", "“Internal server error”"]]} /></td></Row>
            </tbody>
          </Spec>
        </Prose>
      </Sheet>
    </Canvas>
    <WordStatus>
      <button>Page 3 of 12</button><button>1486 words</button>
      <button aria-label="Proofing"><Ico s={14} w={1.600}><path d="M10 17H3V2h14v8M10 2v8M12 12l6 6M18 12l-6 6" /></Ico></button>
      <button>English (United States)</button><button>Text Predictions: On</button>
      <button><Ico s={15} w={1.600}><circle cx="9" cy="3.500" r="2" /><path d="M2 6l5 2v4l-3 7M16 6l-5 2v3M9 13l-1 5M11 15l3 3 5-6" /></Ico>Accessibility: Good to go</button>
      <Spring />
      <button><Ico s={13} w={1.600}><path d="M8 13H2V3h16v6M5 17h4" /><circle cx="14.500" cy="14.500" r="3.500" /></Ico>Display Settings</button>
      <button><Ico s={13} w={1.600}><path d="M2 5V2h3M15 2h3v3M18 15v3h-3M5 18H2v-3M6 5h5l3 3v7H6z" /></Ico>Focus</button>
      <Views>
        <ViewButton aria-label="Read mode"><BookOpen size={14} strokeWidth={1.800} /></ViewButton>
        <ViewButton $on aria-label="Print layout"><Ico s={14} w={1.600}><path d="M4 1h12v18H4zM7 5h6M7 8.500h6M7 12h6M7 15.500h6" /></Ico></ViewButton>
        <ViewButton aria-label="Web layout"><Ico s={14} w={1.600}><path d="M9 18H3V2h13v5M6 6h7M6 9.500h4" /><circle cx="14" cy="14" r="4.500" /><path d="M9.500 14h9M14 9.500v9" /></Ico></ViewButton>
      </Views>
      <Zoom><Minus size={11} strokeWidth={2} /><input type="range" aria-label="Zoom" min={10} max={100} defaultValue={59} /><Plus size={11} strokeWidth={2} /></Zoom>
      <button>170%</button>
    </WordStatus>
  </WordWindow>
);

const Battery = () => <svg width="18" height="14" viewBox="0 0 18 14" aria-hidden="true"><rect x="1" y="1" width="14" height="12" rx="3" fill="none" stroke="#fff" strokeWidth="1.500" /><rect x="3.500" y="3.500" width="8" height="7" rx="1" fill="#fff" /><path d="M16 5h1.500v4H16z" fill="#fff" /></svg>;

export default function App() {
  return (
    <>
      <Global />
      <Desktop>
        <Display $share={3}>
          <ApiClient />
          <Taskbar big tray={<><ChevronUp size={20} strokeWidth={1.800} /><Lang>ENG<br />US</Lang><Wifi size={18} /><Volume2 size={17} strokeWidth={1.600} /><Battery /></>} />
        </Display>
        <Display $share={4}>
          <WordApp />
          <Taskbar big={false} />
        </Display>
      </Desktop>
    </>
  );
}
